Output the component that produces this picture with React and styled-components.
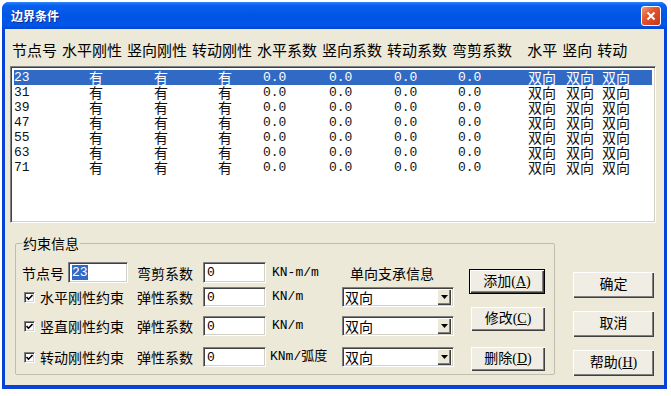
import React from 'react';
import styled, { createGlobalStyle, css } from 'styled-components';

const cjk = `"Noto Sans CJK SC", "Noto Sans", sans-serif`;
const mono = `"Liberation Mono", "Noto Sans CJK SC", monospace`;
const serif = `"Liberation Serif", "Noto Sans CJK SC", serif`;

const GlobalStyle = createGlobalStyle`
  html, body {
    margin: 0;
    padding: 0;
    background: #fff;
  }
  body {
    font-family: ${cjk};
  }
`;

const Page = styled.div`
  padding: 2px 0 0 2px;
`;

const Window = styled.div`
  width: 665px;
  height: 387px;
  box-sizing: border-box;
  display: flex;
  flex-direction: column;
  background: #0842d8;
  border-radius: 7px 7px 0 0;
  overflow: hidden;
`;

const TitleBar = styled.div`
  height: 27px;
  flex: none;
  display: flex;
  align-items: center;
  justify-content: space-between;
  padding: 0 6px 0 9px;
  background: linear-gradient(180deg, #2d86f8 0%, #0a60ee 12%, #0055e5 50%, #0056ea 85%, #0046d2 100%);
`;

const Title = styled.span`
  color: #fff;
  font: bold 12px/1 ${cjk};
  text-shadow: 1px 1px 0 #0a2a8a;
`;

const CloseBox = styled.div`
  width: 20px;
  height: 20px;
  box-sizing: border-box;
  border: 1px solid #fff;
  border-radius: 3px;
  background: linear-gradient(135deg, #f29a7a 0%, #e2552e 40%, #c6371a 100%);
  display: flex;
  align-items: center;
  justify-content: center;
`;

const Client = styled.div`
  flex: 1;
  margin: 0 3px 4px;
  background: #ece9d8;
  display: flex;
  flex-direction: column;
`;

const HeaderRow = styled.div`
  height: 37px;
  box-sizing: border-box;
  padding: 11px 0 0 7px;
  display: flex;
  gap: 5px;
`;

const HeaderLabel = styled.span`
  font: 15px/20px ${cjk};
  color: #000;
  margin-left: ${p => p.$extra || 0}px;
`;

const ListBox = styled.div`
  margin-left: 5px;
  width: 646px;
  height: 157px;
  box-sizing: border-box;
  background: #fff;
  border: 1px solid;
  border-color: #808080 #fff #fff #808080;
  box-shadow: inset 1px 1px #404040, inset -1px -1px #d4d0c8;
  padding: 3px 3px;
`;

const ListRow = styled.div`
  display: grid;
  grid-template-columns: 75px 65px 64px 45px 66px 65px 64px 70px 38px 36px 1fr;
  height: 15px;
  line-height: 15px;
  color: ${p => (p.$selected ? '#fff' : '#111')};
  background: ${p => (p.$selected ? '#316ac5' : 'transparent')};
`;

const Cell = styled.span`
  white-space: nowrap;
  font-family: ${p => (p.$cjk ? cjk : mono)};
  font-size: ${p => (p.$cjk ? 14 : 13)}px;
`;

const Bottom = styled.div`
  display: flex;
  margin-top: 12px;
`;

const Group = styled.fieldset`
  margin: 0 0 0 10px;
  width: 540px;
  height: 140px;
  box-sizing: border-box;
  border: 1px solid #c0bdad;
  border-radius: 2px;
  padding: 11px 9px 0 6px;
  display: flex;
`;

const Legend = styled.legend`
  font: 14px/16px ${cjk};
  padding: 0 1px;
  color: #000;
`;

const Fields = styled.div`
  display: flex;
  flex-direction: column;
`;

const FieldRow = styled.div`
  display: grid;
  grid-template-columns: 115px 66px 63px 76px 112px;
  align-items: center;
  height: ${p => p.$h || 20}px;
  margin-top: ${p => p.$mt || 0}px;
`;

const CellGroup = styled.div`
  display: flex;
  align-items: center;
  height: 100%;
`;

const FieldLabel = styled.span`
  font: 14px/20px ${cjk};
  color: #000;
  white-space: nowrap;
  width: ${p => (p.$w ? `${p.$w}px` : 'auto')};
  margin-left: ${p => p.$ml || 0}px;
`;

const sunken = css`
  box-sizing: border-box;
  background: #fff;
  border: 1px solid;
  border-color: #808080 #fff #fff #808080;
  box-shadow: inset 1px 1px #404040, inset -1px -1px #d4d0c8;
`;

const TextBox = styled.div`
  ${sunken};
  width: ${p => p.$w}px;
  height: ${p => p.$h || 20}px;
  padding: 0 3px;
  display: flex;
  align-items: center;
  font: 13px/1 ${mono};
  color: #000;
`;

const Selected = styled.span`
  background: #316ac5;
  color: #fff;
  padding: 1px 0;
`;

const Check = styled.span`
  ${sunken};
  width: 11px;
  height: 11px;
  margin-left: 2px;
  display: inline-flex;
  align-items: center;
  justify-content: center;
`;

const Unit = styled.span`
  padding-left: ${p => p.$pl || 6}px;
  font: 13px/20px ${mono};
  color: #000;
  white-space: nowrap;
`;

const ComboTitle = styled.span`
  padding-left: 8px;
  font: 14px/20px ${cjk};
  color: #000;
  white-space: nowrap;
`;

const Combo = styled.div`
  ${sunken};
  width: 112px;
  height: 20px;
  display: flex;
  align-items: center;
  justify-content: space-between;
  padding: 2px;
`;

const ComboText = styled.span`
  font: 14px/16px ${cjk};
  color: #000;
`;

const ArrowBtn = styled.span`
  width: 14px;
  height: 16px;
  box-sizing: border-box;
  background: #ece9d8;
  box-shadow: inset 1px 1px #fff, inset -1px -1px #404040, inset -2px -2px #808080;
  display: flex;
  align-items: center;
  justify-content: center;
`;

const ButtonCol = styled.div`
  display: flex;
  flex-direction: column;
  align-items: flex-end;
  margin-left: 15px;
  width: 76px;
`;

const PushButton = styled.button`
  box-sizing: border-box;
  width: ${p => p.$w}px;
  height: ${p => p.$h}px;
  margin-top: ${p => p.$mt || 0}px;
  padding: 0;
  background: #efede4;
  border: none;
  box-shadow: inset 1px 1px #fff, inset -1px -1px #404040, inset -2px -2px #808080;
  font: 14px/1 ${serif};
  color: #000;
  flex: none;
  ${p =>
    p.$default &&
    css`
      border: 1px solid #000;
    `}
`;

const SideCol = styled.div`
  margin-left: 18px;
  width: 81px;
  padding-top: 37px;
  display: flex;
  flex-direction: column;
  gap: 13px;
`;

const headers = [
  ['节点号'], ['水平刚性'], ['竖向刚性'], ['转动刚性'], ['水平系数'], ['竖向系数'],
  ['转动系数'], ['弯剪系数'], ['水平', 10], ['竖向'], ['转动'],
];

const nodes = ['23', '31', '39', '47', '55', '63', '71'];

const CheckMark = () => (
  <svg width="7" height="7" viewBox="0 0 7 7">
    <polyline points="0.5,3 2.5,5.2 6.5,1" fill="none" stroke="#000" strokeWidth="1.6" />
  </svg>
);

const DropArrow = () => (
  <svg width="7" height="4" viewBox="0 0 7 4">
    <polygon points="0,0 7,0 3.5,4" fill="#000" />
  </svg>
);

const springRows = [
  ['水平刚性约束', 'KN/m'],
  ['竖直刚性约束', 'KN/m'],
  ['转动刚性约束', 'KNm/弧度'],
];

export default function App() {
  return (
    <Page>
      <GlobalStyle />
      <Window>
        <TitleBar>
          <Title>边界条件</Title>
          <CloseBox>
            <svg width="10" height="10" viewBox="0 0 10 10">
              <path d="M1.5 1.5 L8.5 8.5 M8.5 1.5 L1.5 8.5" stroke="#fff" strokeWidth="2" />
            </svg>
          </CloseBox>
        </TitleBar>
        <Client>
          <HeaderRow>
            {headers.map(([t, extra]) => (
              <HeaderLabel key={t} $extra={extra}>{t}</HeaderLabel>
            ))}
          </HeaderRow>
          <ListBox>
            {nodes.map((n, i) => (
              <ListRow key={n} $selected={i === 0}>
                <Cell>{n}</Cell>
                <Cell $cjk>有</Cell>
                <Cell $cjk>有</Cell>
                <Cell $cjk>有</Cell>
                <Cell>0.0</Cell>
                <Cell>0.0</Cell>
                <Cell>0.0</Cell>
                <Cell>0.0</Cell>
                <Cell $cjk>双向</Cell>
                <Cell $cjk>双向</Cell>
                <Cell $cjk>双向</Cell>
              </ListRow>
            ))}
          </ListBox>
          <Bottom>
            <Group>
              <Legend>约束信息</Legend>
              <Fields>
                <FieldRow $h={21}>
                  <CellGroup>
                    <FieldLabel $w={46}>节点号</FieldLabel>
                    <TextBox $w={60} $h={21}>
                      <Selected>23</Selected>
                    </TextBox>
                  </CellGroup>
                  <FieldLabel>弯剪系数</FieldLabel>
                  <TextBox $w={63} $h={21}>0</TextBox>
                  <Unit>KN-m/m</Unit>
                  <ComboTitle>单向支承信息</ComboTitle>
                </FieldRow>
                {springRows.map(([label, unit], i) => (
                  <FieldRow key={label} $mt={i === 0 ? 4 : i === 1 ? 9 : 11}>
                    <CellGroup>
                      <Check><CheckMark /></Check>
                      <FieldLabel $ml={5}>{label}</FieldLabel>
                    </CellGroup>
                    <FieldLabel>弹性系数</FieldLabel>
                    <TextBox $w={63}>0</TextBox>
                    <Unit $pl={i === 2 ? 4 : 6}>{unit}</Unit>
                    <Combo>
                      <ComboText>双向</ComboText>
                      <ArrowBtn><DropArrow /></ArrowBtn>
                    </Combo>
                  </FieldRow>
                ))}
              </Fields>
              <ButtonCol>
                <PushButton $default $w={76} $h={25} $mt={7}>
                  添加(<u>A</u>)
                </PushButton>
                <PushButton $w={74} $h={24} $mt={13}>
                  修改(<u>C</u>)
                </PushButton>
                <PushButton $w={74} $h={24} $mt={16}>
                  删除(<u>D</u>)
                </PushButton>
              </ButtonCol>
            </Group>
            <SideCol>
              <PushButton $w={81} $h={26}>确定</PushButton>
              <PushButton $w={81} $h={26}>取消</PushButton>
              <PushButton $w={81} $h={26}>
                帮助(<u>H</u>)
              </PushButton>
            </SideCol>
          </Bottom>
        </Client>
      </Window>
    </Page>
  );
}
